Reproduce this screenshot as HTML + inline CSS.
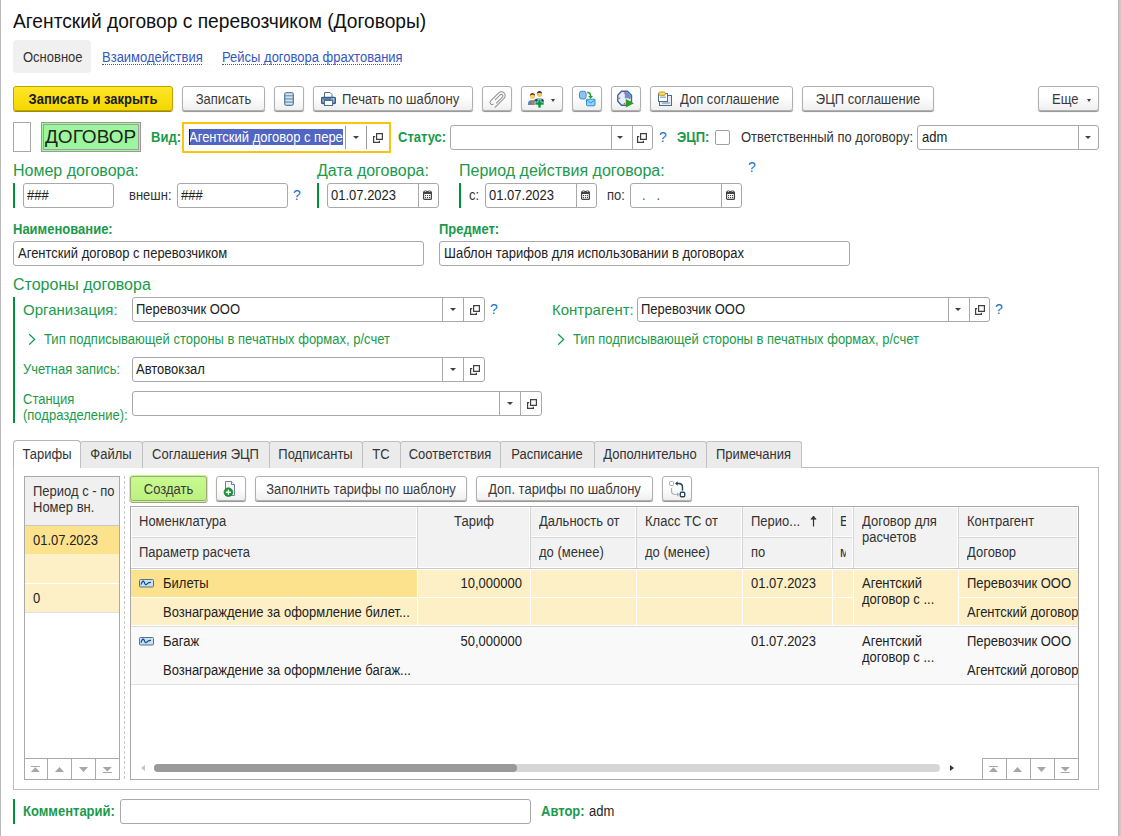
<!DOCTYPE html>
<html><head><meta charset="utf-8">
<style>
*{box-sizing:border-box;margin:0;padding:0}
html,body{width:1121px;height:836px;overflow:hidden;background:#fff}
body{position:relative;font-family:"Liberation Sans",sans-serif;font-size:13px;color:#333}
.a{position:absolute;white-space:nowrap}
.t{position:absolute;white-space:nowrap;line-height:15px;transform:scaleY(1.08);transform-origin:0 12px}
.bt{display:inline-block;transform:scaleY(1.08);transform-origin:0 15.5px}
.g{color:#1b9a4b}
.gb{color:#1b9a4b;font-weight:bold}
.btn{position:absolute;height:25px;border:1px solid #b0b0b0;border-radius:3px;background:linear-gradient(#fff 0%,#fff 45%,#efefef 100%);box-shadow:0 1px 0 #9a9a9a,0 1px 1px #b8b8b8;color:#3a3a3a;text-align:center;line-height:22px;padding-top:2px;white-space:nowrap}
.fld{position:absolute;border:1px solid #a9a9a9;border-radius:3px;background:#fff}
.sep{position:absolute;top:0;bottom:0;width:1px;background:#a9a9a9}
.gbar{position:absolute;width:2px;background:#00903c}
.q{position:absolute;color:#1a73c6;font-size:14px;font-weight:normal}
.dd{position:absolute;width:0;height:0;border-left:3px solid transparent;border-right:3px solid transparent;border-top:3px solid #404040}
.cal,.opn{position:absolute}
svg{display:block}
.ico{position:absolute;width:14px;height:7px;border:1px solid #5a7ea8;border-radius:1px;background:#cfe0f2}
.tab{position:absolute;top:440px;height:28px;border:1px solid #c4c4c4;border-bottom:none;border-radius:3px 3px 0 0;background:#ececec;text-align:center;line-height:25px;color:#333}
</style></head><body>
<!-- window edges -->
<div class="a" style="left:0;top:0;width:1px;height:836px;background:#b9b9b9"></div>
<div class="a" style="left:1118px;top:0;width:3px;height:836px;background:linear-gradient(90deg,#b0b0b0,#c6c6c6,#cccccc)"></div>

<!-- title -->
<div class="t" style="left:13px;top:11px;font-size:19.2px;line-height:22px;color:#111;transform-origin:0 17.65px">Агентский договор с перевозчиком (Договоры)</div>

<!-- nav -->
<div class="a" style="left:13px;top:40px;width:78px;height:33px;background:#f0f0f0;border-radius:4px"></div>
<div class="t" style="left:23px;top:50px;color:#333">Основное</div>
<div class="t" style="left:102px;top:50px;color:#3358c0">Взаимодействия</div>
<div class="a" style="left:102px;top:64px;width:100px;height:1px;border-bottom:1px dotted #3358c0"></div>
<div class="t" style="left:222px;top:50px;color:#3358c0">Рейсы договора фрахтования</div>
<div class="a" style="left:222px;top:64px;width:178px;height:1px;border-bottom:1px dotted #3358c0"></div>

<!-- toolbar -->
<div class="btn" style="left:13px;top:86px;width:160px;background:linear-gradient(#ffe628,#f4d700);border-color:#c2a300;box-shadow:0 1px 0 #a08a00;font-weight:bold;color:#1a1a1a"><span class="bt">Записать и закрыть</span></div>
<div class="btn" style="left:182px;top:86px;width:83px"><span class="bt">Записать</span></div>
<div class="btn" style="left:274px;top:86px;width:30px"></div>
<div class="btn" style="left:313px;top:86px;width:160px;text-align:left;padding-left:28px"><span class="bt">Печать по шаблону</span></div>
<div class="btn" style="left:482px;top:86px;width:30px"></div>
<div class="btn" style="left:521px;top:86px;width:42px"></div>
<div class="btn" style="left:572px;top:86px;width:30px"></div>
<div class="btn" style="left:611px;top:86px;width:30px"></div>
<div class="btn" style="left:650px;top:86px;width:143px;text-align:left;padding-left:29px"><span class="bt">Доп соглашение</span></div>
<div class="btn" style="left:802px;top:86px;width:132px"><span class="bt">ЭЦП соглашение</span></div>
<div class="btn" style="left:1038px;top:86px;width:61px;text-align:left;padding-left:13px"><span class="bt">Еще</span></div>
<div class="dd" style="left:1087px;top:99px;border-left-width:2.5px;border-right-width:2.5px"></div>


<!-- toolbar icons -->
<svg class="a" style="left:284px;top:92px" width="10" height="14" viewBox="0 0 10 14">
 <rect x="0.5" y="0.5" width="9" height="13" rx="2" fill="#7896b2" stroke="#5e7f9e"/>
 <rect x="1.5" y="1.3" width="7" height="1.8" fill="#d4e6f4"/>
 <rect x="1.5" y="4.4" width="7" height="1.8" fill="#d4e6f4"/>
 <rect x="1.5" y="7.6" width="7" height="1.8" fill="#d4e6f4"/>
 <rect x="1.5" y="10.8" width="7" height="1.8" fill="#d4e6f4"/>
</svg>
<svg class="a" style="left:321px;top:92px" width="15" height="14" viewBox="0 0 15 14">
 <path d="M3.5 0.5H9L11 2.5V6H3.5Z" fill="#fff" stroke="#4f6f8f"/>
 <rect x="0.5" y="5.5" width="14" height="6" rx="1.5" fill="#8eaed0" stroke="#325d88" stroke-width="1.6"/>
 <rect x="2.5" y="6.6" width="10" height="1" fill="#2f557d"/>
 <rect x="10.3" y="6.4" width="1.2" height="1" fill="#fff"/><rect x="12" y="6.4" width="1.2" height="1" fill="#fff"/>
 <rect x="3.5" y="8.5" width="8" height="5" fill="#fff" stroke="#4f6f8f"/>
</svg>
<svg class="a" style="left:487px;top:90px" width="20" height="20" viewBox="0 0 20 20">
 <g transform="rotate(45 10 10)" fill="none" stroke="#929292" stroke-width="1.05">
  <path d="M13.8 17 V3.8 A3.8 3.8 0 0 0 6.2 3.8 V15.2 A2 2 0 0 0 10.2 15.2"/>
  <path d="M8.6 11.5 V4.2 A1.6 1.6 0 0 1 11.8 4.2 V13"/>
 </g>
</svg>
<svg class="a" style="left:527px;top:90px" width="18" height="18" viewBox="0 0 18 18">
 <path d="M7 10.5 Q8 8.5 11 8.5 L14 8.5 Q16.8 8.7 17 11 L17 13 L7 13Z" fill="#2b3470"/>
 <circle cx="12.5" cy="4.3" r="2.6" fill="#f3c463"/>
 <path d="M9.8 4 Q10 1 12.5 1 Q15 1 15.2 4 Q14 2.6 12.5 2.7 Q11 2.6 9.8 4Z" fill="#2d2f5e"/>
 <path d="M1 15 L1 13.2 Q1.3 10.4 4 10.3 L7 10.3 Q9.5 10.5 9.8 13.2 L9.8 15Z" fill="#5d88ad"/>
 <path d="M5.1 10.4 L5.9 10.4 L6.2 15 L4.8 15Z" fill="#e2735a"/>
 <circle cx="5.5" cy="6.3" r="2.6" fill="#f5cf6a"/>
 <path d="M2.8 6 Q3 3.1 5.5 3.1 Q8 3.1 8.2 6 Q7 4.6 5.5 4.7 Q4 4.6 2.8 6Z" fill="#6b3a10"/>
 <path d="M11 9H14V12H17V15H14V18H11V15H8V12H11Z" fill="#05983e" stroke="#fff" stroke-width="0.6"/>
</svg>
<div class="dd" style="left:551px;top:99px;border-left-width:2.5px;border-right-width:2.5px;border-top-width:3px"></div>
<svg class="a" style="left:578px;top:90px" width="18" height="17" viewBox="0 0 18 17">
 <rect x="1.5" y="1.2" width="6.6" height="7.8" rx="2.2" fill="#8cc4ef" stroke="#3b8bd2" stroke-width="1"/>
 <path d="M9.3 2.6 Q12.8 2.3 12.6 6.5" fill="none" stroke="#1f9f1f" stroke-width="1.5"/>
 <path d="M10.2 6 L15 6 L12.6 8.8Z" fill="#1f9f1f"/>
 <rect x="8.5" y="9.2" width="8.5" height="6.6" rx="1" fill="#92d3f9" stroke="#2e8ad6" stroke-width="1"/>
 <path d="M8.8 10 L12.75 13 L16.7 10" fill="none" stroke="#2e8ad6" stroke-width="0.9"/>
</svg>
<svg class="a" style="left:617px;top:90px" width="18" height="18" viewBox="0 0 18 18">
 <path d="M4.5 1.2H10.5L14.5 5.2V11.2L10.5 15.2H4.5L0.8 11.2V5.2Z" fill="#e9eff9" stroke="#3c64ae" stroke-width="1.4"/>
 <path d="M7.8 2 H10.2 L13.8 5.5 V8.2 H7.8Z" fill="#6f8fd0"/>
 <g fill="#f0503c"><circle cx="7.5" cy="3" r="0.8"/><circle cx="12.5" cy="8.2" r="0.8"/><circle cx="7.5" cy="13.5" r="0.8"/><circle cx="2.5" cy="8.2" r="0.8"/></g>
 <path d="M8.8 9 L17 13.2 L8.8 17.4Z" fill="#2b9b2b"/>
</svg>
<svg class="a" style="left:657px;top:91px" width="16" height="16" viewBox="0 0 16 16">
 <rect x="2.5" y="4.5" width="12" height="10" fill="#e8eef4" stroke="#4a6f8e"/>
 <rect x="5" y="11" width="8" height="2" fill="#a9bccd"/>
 <rect x="1.5" y="2.5" width="9" height="8" fill="#fff" stroke="#4a6f8e"/>
 <rect x="3" y="5.5" width="6" height="1.5" fill="#9fb4c8"/>
 <rect x="1.8" y="1" width="6.6" height="3.4" rx="1.4" fill="#f7de70" stroke="#c99b1b" stroke-width="1"/>
</svg>
<!-- row 2 -->
<div class="a" style="left:13px;top:122px;width:18px;height:30px;border:1px solid #a9a9a9"></div>
<div class="a" style="left:41px;top:122px;width:100px;height:30px;border:1px solid #9a9a9a;background:#9cf79c;padding:1px">
  <div style="width:100%;height:100%;border:1px solid #a49ca4"></div>
</div>
<div class="t" style="left:45px;top:126px;font-size:19px;line-height:22px;color:#222;transform:none">ДОГОВОР</div>
<div class="t gb" style="left:151px;top:130px">Вид:</div>
<div class="a" style="left:182px;top:122px;width:209px;height:31px;border:2px solid #f9c40e;background:#fff"></div>
<div class="a" style="left:189px;top:129px;width:154px;height:16px;background:#5165c2"></div>
<div class="t" style="left:189px;top:130px;color:#fff">Агентский договор с пере</div>
<div class="a" style="left:189px;top:129px;width:1px;height:16px;background:#1a1a1a"></div>
<div class="a" style="left:345px;top:126px;width:1px;height:23px;background:#999"></div>
<div class="a" style="left:366px;top:126px;width:1px;height:23px;background:#999"></div>
<div class="dd" style="left:353px;top:136px"></div>
<div class="opn" style="left:373px;top:133px"><svg width="10" height="10" viewBox="0 0 10 10"><path d="M3.6 0.6H9.4V6.4H3.6Z M2.2 3.6H0.6V9.4H6.4V7.8" fill="none" stroke="#404040" stroke-width="1.2"/></svg></div>

<div class="t gb" style="left:398px;top:130px">Статус:</div>
<div class="fld" style="left:450px;top:125px;width:203px;height:25px"><div class="sep" style="left:160px"></div><div class="sep" style="left:181px"></div></div>
<div class="dd" style="left:617px;top:136px"></div>
<div class="opn" style="left:637px;top:133px"><svg width="10" height="10" viewBox="0 0 10 10"><path d="M3.6 0.6H9.4V6.4H3.6Z M2.2 3.6H0.6V9.4H6.4V7.8" fill="none" stroke="#404040" stroke-width="1.2"/></svg></div>
<div class="q" style="left:659px;top:129px">?</div>
<div class="t gb" style="left:677px;top:130px">ЭЦП:</div>
<div class="a" style="left:715px;top:130px;width:15px;height:15px;border:1px solid #a0a0a0;border-radius:2px"></div>
<div class="t" style="left:741px;top:130px">Ответственный по договору:</div>
<div class="fld" style="left:917px;top:125px;width:182px;height:25px"><div class="sep" style="left:160px"></div></div>
<div class="t" style="left:922px;top:130px;color:#222">adm</div>
<div class="dd" style="left:1085px;top:136px"></div>


<!-- row 3: numbers/dates -->
<div class="t g" style="left:13px;top:162px;font-size:16px;line-height:18px;transform:none">Номер договора:</div>
<div class="gbar" style="left:13px;top:183px;height:25px"></div>
<div class="fld" style="left:23px;top:183px;width:91px;height:25px"></div>
<div class="t" style="left:27px;top:188px;color:#222">###</div>
<div class="t" style="left:129px;top:188px">внешн:</div>
<div class="fld" style="left:177px;top:183px;width:111px;height:25px"></div>
<div class="t" style="left:181px;top:188px;color:#222">###</div>
<div class="q" style="left:293px;top:187px">?</div>

<div class="t g" style="left:317px;top:162px;font-size:16px;line-height:18px;transform:none">Дата договора:</div>
<div class="gbar" style="left:317px;top:183px;height:25px"></div>
<div class="fld" style="left:327px;top:183px;width:112px;height:25px"><div class="sep" style="left:90px"></div></div>
<div class="t" style="left:331px;top:188px;color:#222">01.07.2023</div>
<div class="cal" style="left:423px;top:190px"><svg width="9" height="10" viewBox="0 0 9 10"><rect x="0.6" y="1.6" width="7.8" height="7.8" rx="1" fill="#fff" stroke="#444" stroke-width="1.2"/><rect x="0.6" y="1.6" width="7.8" height="2.4" fill="#444"/><circle cx="2.5" cy="1.2" r="0.9" fill="#fff" stroke="#444" stroke-width="0.6"/><circle cx="6.5" cy="1.2" r="0.9" fill="#fff" stroke="#444" stroke-width="0.6"/><g fill="#444"><rect x="2" y="5" width="1.1" height="1.1"/><rect x="4" y="5" width="1.1" height="1.1"/><rect x="6" y="5" width="1.1" height="1.1"/><rect x="2" y="7" width="1.1" height="1.1"/><rect x="4" y="7" width="1.1" height="1.1"/><rect x="6" y="7" width="1.1" height="1.1"/></g></svg></div>

<div class="t g" style="left:459px;top:162px;font-size:16px;line-height:18px;transform:none">Период действия договора:</div>
<div class="gbar" style="left:459px;top:183px;height:25px"></div>
<div class="t" style="left:469px;top:188px">с:</div>
<div class="fld" style="left:485px;top:183px;width:112px;height:25px"><div class="sep" style="left:90px"></div></div>
<div class="t" style="left:489px;top:188px;color:#222">01.07.2023</div>
<div class="cal" style="left:581px;top:190px"><svg width="9" height="10" viewBox="0 0 9 10"><rect x="0.6" y="1.6" width="7.8" height="7.8" rx="1" fill="#fff" stroke="#444" stroke-width="1.2"/><rect x="0.6" y="1.6" width="7.8" height="2.4" fill="#444"/><circle cx="2.5" cy="1.2" r="0.9" fill="#fff" stroke="#444" stroke-width="0.6"/><circle cx="6.5" cy="1.2" r="0.9" fill="#fff" stroke="#444" stroke-width="0.6"/><g fill="#444"><rect x="2" y="5" width="1.1" height="1.1"/><rect x="4" y="5" width="1.1" height="1.1"/><rect x="6" y="5" width="1.1" height="1.1"/><rect x="2" y="7" width="1.1" height="1.1"/><rect x="4" y="7" width="1.1" height="1.1"/><rect x="6" y="7" width="1.1" height="1.1"/></g></svg></div>
<div class="t" style="left:607px;top:188px">по:</div>
<div class="fld" style="left:630px;top:183px;width:112px;height:25px"><div class="sep" style="left:90px"></div></div>
<div class="t" style="left:642px;top:188px;color:#555">.&nbsp;&nbsp;&nbsp;.</div>
<div class="cal" style="left:726px;top:190px"><svg width="9" height="10" viewBox="0 0 9 10"><rect x="0.6" y="1.6" width="7.8" height="7.8" rx="1" fill="#fff" stroke="#444" stroke-width="1.2"/><rect x="0.6" y="1.6" width="7.8" height="2.4" fill="#444"/><circle cx="2.5" cy="1.2" r="0.9" fill="#fff" stroke="#444" stroke-width="0.6"/><circle cx="6.5" cy="1.2" r="0.9" fill="#fff" stroke="#444" stroke-width="0.6"/><g fill="#444"><rect x="2" y="5" width="1.1" height="1.1"/><rect x="4" y="5" width="1.1" height="1.1"/><rect x="6" y="5" width="1.1" height="1.1"/><rect x="2" y="7" width="1.1" height="1.1"/><rect x="4" y="7" width="1.1" height="1.1"/><rect x="6" y="7" width="1.1" height="1.1"/></g></svg></div>
<div class="q" style="left:748px;top:159px">?</div>

<!-- name / subject -->
<div class="t gb" style="left:13px;top:222px">Наименование:</div>
<div class="fld" style="left:13px;top:241px;width:411px;height:25px"></div>
<div class="t" style="left:18px;top:246px;color:#222">Агентский договор с перевозчиком</div>
<div class="t gb" style="left:439px;top:222px">Предмет:</div>
<div class="fld" style="left:439px;top:241px;width:411px;height:25px"></div>
<div class="t" style="left:444px;top:246px;color:#222">Шаблон тарифов для использовании в договорах</div>

<!-- parties -->
<div class="t g" style="left:13px;top:276px;font-size:16px;line-height:18px;transform:none">Стороны договора</div>
<div class="gbar" style="left:13px;top:297px;height:126px"></div>
<div class="t g" style="left:23px;top:301px;font-size:15px;line-height:17px;transform:none">Организация:</div>
<div class="fld" style="left:132px;top:297px;width:353px;height:25px"><div class="sep" style="left:309px"></div><div class="sep" style="left:330px"></div></div>
<div class="t" style="left:136px;top:302px;color:#222">Перевозчик ООО</div>
<div class="dd" style="left:450px;top:308px"></div>
<div class="opn" style="left:470px;top:305px"><svg width="10" height="10" viewBox="0 0 10 10"><path d="M3.6 0.6H9.4V6.4H3.6Z M2.2 3.6H0.6V9.4H6.4V7.8" fill="none" stroke="#404040" stroke-width="1.2"/></svg></div>
<div class="q" style="left:490px;top:301px">?</div>
<svg class="a" style="left:28px;top:333px" width="10" height="13" viewBox="0 0 10 13"><path d="M1.2 1.2L6.6 6.4L1.2 11.6" fill="none" stroke="#05994a" stroke-width="1.3"/></svg>
<div class="t g" style="left:44px;top:332px">Тип подписывающей стороны в печатных формах, р/счет</div>
<div class="t g" style="left:23px;top:362px">Учетная запись:</div>
<div class="fld" style="left:132px;top:357px;width:353px;height:25px"><div class="sep" style="left:309px"></div><div class="sep" style="left:330px"></div></div>
<div class="t" style="left:136px;top:362px;color:#222">Автовокзал</div>
<div class="dd" style="left:450px;top:368px"></div>
<div class="opn" style="left:470px;top:365px"><svg width="10" height="10" viewBox="0 0 10 10"><path d="M3.6 0.6H9.4V6.4H3.6Z M2.2 3.6H0.6V9.4H6.4V7.8" fill="none" stroke="#404040" stroke-width="1.2"/></svg></div>
<div class="t g" style="left:23px;top:392px;">Станция</div>
<div class="t g" style="left:23px;top:408px;">(подразделение):</div>
<div class="fld" style="left:132px;top:391px;width:410px;height:25px"><div class="sep" style="left:366px"></div><div class="sep" style="left:387px"></div></div>
<div class="dd" style="left:507px;top:402px"></div>
<div class="opn" style="left:527px;top:399px"><svg width="10" height="10" viewBox="0 0 10 10"><path d="M3.6 0.6H9.4V6.4H3.6Z M2.2 3.6H0.6V9.4H6.4V7.8" fill="none" stroke="#404040" stroke-width="1.2"/></svg></div>

<div class="t g" style="left:552px;top:301px;font-size:15px;line-height:17px;transform:none">Контрагент:</div>
<div class="fld" style="left:637px;top:297px;width:353px;height:25px"><div class="sep" style="left:310px"></div><div class="sep" style="left:331px"></div></div>
<div class="t" style="left:641px;top:302px;color:#222">Перевозчик ООО</div>
<div class="dd" style="left:955px;top:308px"></div>
<div class="opn" style="left:975px;top:305px"><svg width="10" height="10" viewBox="0 0 10 10"><path d="M3.6 0.6H9.4V6.4H3.6Z M2.2 3.6H0.6V9.4H6.4V7.8" fill="none" stroke="#404040" stroke-width="1.2"/></svg></div>
<div class="q" style="left:995px;top:301px">?</div>
<svg class="a" style="left:557px;top:333px" width="10" height="13" viewBox="0 0 10 13"><path d="M1.2 1.2L6.6 6.4L1.2 11.6" fill="none" stroke="#05994a" stroke-width="1.3"/></svg>
<div class="t g" style="left:573px;top:332px">Тип подписывающей стороны в печатных формах, р/счет</div>

<!-- tab panel -->
<div class="a" style="left:13px;top:467px;width:1086px;height:323px;border:1px solid #bcbcbc"></div>
<div class="a" style="left:13px;top:440px;width:68px;height:28px;border:1px solid #b4b4b4;border-bottom:none;border-radius:4px 4px 0 0;background:#fff"></div>
<div class="t" style="left:14px;top:447px;width:66px;text-align:center;color:#333">Тарифы</div>
<div class="a" style="left:80px;top:441px;width:63px;height:27px;border:1px solid #c0c0c0;border-bottom:none;border-radius:3px 3px 0 0;background:#ebebeb"></div>
<div class="t" style="left:80px;top:447px;width:62px;text-align:center;color:#333">Файлы</div>
<div class="a" style="left:142px;top:441px;width:128px;height:27px;border:1px solid #c0c0c0;border-bottom:none;border-radius:3px 3px 0 0;background:#ebebeb"></div>
<div class="t" style="left:142px;top:447px;width:127px;text-align:center;color:#333">Соглашения ЭЦП</div>
<div class="a" style="left:269px;top:441px;width:94px;height:27px;border:1px solid #c0c0c0;border-bottom:none;border-radius:3px 3px 0 0;background:#ebebeb"></div>
<div class="t" style="left:269px;top:447px;width:93px;text-align:center;color:#333">Подписанты</div>
<div class="a" style="left:362px;top:441px;width:39px;height:27px;border:1px solid #c0c0c0;border-bottom:none;border-radius:3px 3px 0 0;background:#ebebeb"></div>
<div class="t" style="left:362px;top:447px;width:38px;text-align:center;color:#333">ТС</div>
<div class="a" style="left:400px;top:441px;width:101px;height:27px;border:1px solid #c0c0c0;border-bottom:none;border-radius:3px 3px 0 0;background:#ebebeb"></div>
<div class="t" style="left:400px;top:447px;width:100px;text-align:center;color:#333">Соответствия</div>
<div class="a" style="left:500px;top:441px;width:95px;height:27px;border:1px solid #c0c0c0;border-bottom:none;border-radius:3px 3px 0 0;background:#ebebeb"></div>
<div class="t" style="left:500px;top:447px;width:94px;text-align:center;color:#333">Расписание</div>
<div class="a" style="left:594px;top:441px;width:113px;height:27px;border:1px solid #c0c0c0;border-bottom:none;border-radius:3px 3px 0 0;background:#ebebeb"></div>
<div class="t" style="left:594px;top:447px;width:112px;text-align:center;color:#333">Дополнительно</div>
<div class="a" style="left:706px;top:441px;width:96px;height:27px;border:1px solid #c0c0c0;border-bottom:none;border-radius:3px 3px 0 0;background:#ebebeb"></div>
<div class="t" style="left:706px;top:447px;width:95px;text-align:center;color:#333">Примечания</div>

<!-- left list -->
<div class="a" style="left:24px;top:476px;width:96px;height:304px;border:1px solid #a9a9a9;background:#fff"></div>
<div class="a" style="left:25px;top:477px;width:94px;height:48px;background:#f0f0f0"></div>
<div class="a" style="left:25px;top:525px;width:94px;height:1px;background:#c8c8c8"></div>
<div class="a" style="left:25px;top:526px;width:94px;height:28px;background:#fde28e"></div>
<div class="a" style="left:25px;top:554px;width:94px;height:29px;background:#fdf0c6"></div>
<div class="a" style="left:25px;top:584px;width:94px;height:28px;background:#fdf0c6"></div>
<div class="a" style="left:25px;top:612px;width:94px;height:1px;background:#e2e2e2"></div>
<div class="t" style="left:33px;top:484px;color:#333">Период с - по</div>
<div class="t" style="left:33px;top:500px;color:#333">Номер вн.</div>
<div class="t" style="left:33px;top:533px;color:#222">01.07.2023</div>
<div class="t" style="left:33px;top:591px;color:#222">0</div>
<div class="a" style="left:24px;top:758px;width:96px;height:22px;border:1px solid #a9a9a9;border-top:1px solid #a9a9a9"></div>
<div class="a" style="left:47px;top:759px;width:1px;height:20px;background:#a9a9a9"></div>
<div class="a" style="left:71px;top:759px;width:1px;height:20px;background:#a9a9a9"></div>
<div class="a" style="left:95px;top:759px;width:1px;height:20px;background:#a9a9a9"></div>
<div class="a" style="left:124px;top:476px;width:1px;height:304px;background:repeating-linear-gradient(#c8c8c8 0 3px,transparent 3px 5px)"></div>

<!-- table toolbar -->
<div class="btn" style="left:130px;top:476px;width:77px;background:linear-gradient(#c8fb8e,#bcf182);border-color:#a2a47a;box-shadow:0 0 0 1px #c4f98c,0 1px 0 1px #9aa878"><span class="bt">Создать</span></div>
<div class="btn" style="left:216px;top:476px;width:30px"></div>
<div class="btn" style="left:255px;top:476px;width:212px"><span class="bt">Заполнить тарифы по шаблону</span></div>
<div class="btn" style="left:476px;top:476px;width:177px"><span class="bt">Доп. тарифы по шаблону</span></div>
<div class="btn" style="left:662px;top:476px;width:30px"></div>

<!-- table -->
<div class="a" style="left:130px;top:506px;width:949px;height:274px;border:1px solid #a9a9a9;background:#fff;overflow:hidden">
  <div class="a" style="left:0;top:0;width:947px;height:62px;background:#fff"></div>
  <div class="a" style="left:0;top:61px;width:947px;height:1px;background:#c8c8c8"></div>
<div class="a" style="left:286px;top:0;width:1px;height:61px;background:#d6d6d6"></div>
<div class="a" style="left:399px;top:0;width:1px;height:61px;background:#d6d6d6"></div>
<div class="a" style="left:505px;top:0;width:1px;height:61px;background:#d6d6d6"></div>
<div class="a" style="left:611px;top:0;width:1px;height:61px;background:#d6d6d6"></div>
<div class="a" style="left:701px;top:0;width:1px;height:61px;background:#d6d6d6"></div>
<div class="a" style="left:722px;top:0;width:1px;height:61px;background:#d6d6d6"></div>
<div class="a" style="left:827px;top:0;width:1px;height:61px;background:#d6d6d6"></div>
<div class="a" style="left:1px;top:1px;width:284px;height:28px;background:#f2f2f2"></div>
<div class="a" style="left:1px;top:31px;width:284px;height:29px;background:#f2f2f2"></div>
<div class="a" style="left:1px;top:30px;width:284px;height:1px;background:#d6d6d6"></div>
<div class="a" style="left:287px;top:1px;width:111px;height:59px;background:#f2f2f2"></div>
<div class="a" style="left:400px;top:1px;width:104px;height:28px;background:#f2f2f2"></div>
<div class="a" style="left:400px;top:31px;width:104px;height:29px;background:#f2f2f2"></div>
<div class="a" style="left:400px;top:30px;width:104px;height:1px;background:#d6d6d6"></div>
<div class="a" style="left:506px;top:1px;width:104px;height:28px;background:#f2f2f2"></div>
<div class="a" style="left:506px;top:31px;width:104px;height:29px;background:#f2f2f2"></div>
<div class="a" style="left:506px;top:30px;width:104px;height:1px;background:#d6d6d6"></div>
<div class="a" style="left:612px;top:1px;width:88px;height:28px;background:#f2f2f2"></div>
<div class="a" style="left:612px;top:31px;width:88px;height:29px;background:#f2f2f2"></div>
<div class="a" style="left:612px;top:30px;width:88px;height:1px;background:#d6d6d6"></div>
<div class="a" style="left:702px;top:1px;width:19px;height:28px;background:#f2f2f2"></div>
<div class="a" style="left:702px;top:31px;width:19px;height:29px;background:#f2f2f2"></div>
<div class="a" style="left:702px;top:30px;width:19px;height:1px;background:#d6d6d6"></div>
<div class="a" style="left:723px;top:1px;width:103px;height:59px;background:#f2f2f2"></div>
<div class="a" style="left:828px;top:1px;width:118px;height:28px;background:#f2f2f2"></div>
<div class="a" style="left:828px;top:31px;width:118px;height:29px;background:#f2f2f2"></div>
<div class="a" style="left:828px;top:30px;width:118px;height:1px;background:#d6d6d6"></div>
</div>

<!-- table header texts -->
<div class="t" style="left:139px;top:514px">Номенклатура</div>
<div class="t" style="left:139px;top:545px">Параметр расчета</div>
<div class="t" style="left:418px;top:514px;width:112px;text-align:center">Тариф</div>
<div class="t" style="left:539px;top:514px">Дальность от</div>
<div class="t" style="left:539px;top:545px">до (менее)</div>
<div class="t" style="left:645px;top:514px">Класс ТС от</div>
<div class="t" style="left:645px;top:545px">до (менее)</div>
<div class="t" style="left:751px;top:514px">Перио...</div>
<svg class="a" style="left:810px;top:515px" width="7" height="12" viewBox="0 0 7 12"><path d="M3.5 1.2V11.5" stroke="#333" stroke-width="1.2"/><path d="M0.8 4.2L3.5 1L6.2 4.2Z" fill="#333" stroke="#333" stroke-width="0.6"/></svg>
<div class="t" style="left:751px;top:545px">по</div>
<div class="a" style="left:833px;top:507px;width:13px;height:60px;overflow:hidden"><div class="t" style="left:7px;top:7px">Е</div><div class="t" style="left:7px;top:38px">м</div></div>
<div class="t" style="left:862px;top:514px;">Договор для</div>
<div class="t" style="left:862px;top:530px;">расчетов</div>
<div class="a" style="left:959px;top:507px;width:119px;height:170px;overflow:hidden">
<div class="t" style="left:8px;top:7px">Контрагент</div>
<div class="t" style="left:8px;top:38px">Договор</div>
</div>
<div class="a" style="left:131px;top:568px;width:947px;height:1px;background:#c8c8c8"></div>
<div class="a" style="left:131px;top:569px;width:947px;height:57px;background:#fff"></div>
<div class="a" style="left:131px;top:570px;width:286px;height:27px;background:#fde28e"></div>
<div class="a" style="left:131px;top:598px;width:286px;height:27px;background:#fdf0c6"></div>
<div class="a" style="left:418px;top:570px;width:112px;height:27px;background:#fdf0c6"></div>
<div class="a" style="left:418px;top:598px;width:112px;height:27px;background:#fdf0c6"></div>
<div class="a" style="left:531px;top:570px;width:105px;height:27px;background:#fdf0c6"></div>
<div class="a" style="left:531px;top:598px;width:105px;height:27px;background:#fdf0c6"></div>
<div class="a" style="left:637px;top:570px;width:105px;height:27px;background:#fdf0c6"></div>
<div class="a" style="left:637px;top:598px;width:105px;height:27px;background:#fdf0c6"></div>
<div class="a" style="left:743px;top:570px;width:89px;height:27px;background:#fdf0c6"></div>
<div class="a" style="left:743px;top:598px;width:89px;height:27px;background:#fdf0c6"></div>
<div class="a" style="left:833px;top:570px;width:20px;height:27px;background:#fdf0c6"></div>
<div class="a" style="left:833px;top:598px;width:20px;height:27px;background:#fdf0c6"></div>
<div class="a" style="left:854px;top:570px;width:104px;height:55px;background:#fdf0c6"></div>
<div class="a" style="left:959px;top:570px;width:119px;height:27px;background:#fdf0c6"></div>
<div class="a" style="left:959px;top:598px;width:119px;height:27px;background:#fdf0c6"></div>
<div class="a" style="left:131px;top:626px;width:947px;height:1px;background:#dcdcdc"></div>
<div class="a" style="left:131px;top:627px;width:947px;height:57px;background:#f9f9f9"></div>
<div class="a" style="left:131px;top:684px;width:947px;height:1px;background:#e0e0e0"></div>

<div class="a" style="left:139px;top:579px"><svg width="16" height="9" viewBox="0 0 16 9"><rect x="0.5" y="0.5" width="14" height="7.5" rx="1" fill="#c8e0f4" stroke="#56718e"/><path d="M2 5.6 Q3.5 1.4 4.5 2.2 Q5.4 3 6 5 Q6.8 6.4 8.6 4.4 Q9.6 3.4 12 3.4" fill="none" stroke="#134d8a" stroke-width="1.2"/></svg></div>
<div class="t" style="left:163px;top:576px;color:#222">Билеты</div>
<div class="t" style="left:163px;top:605px;color:#222">Вознаграждение за оформление билет...</div>
<div class="t" style="left:418px;top:576px;width:104px;text-align:right;color:#222">10,000000</div>
<div class="t" style="left:751px;top:576px;color:#222">01.07.2023</div>
<div class="t" style="left:862px;top:576px;color:#222">Агентский</div>
<div class="t" style="left:862px;top:592px;color:#222">договор с ...</div>
<div class="a" style="left:139px;top:637px"><svg width="16" height="9" viewBox="0 0 16 9"><rect x="0.5" y="0.5" width="14" height="7.5" rx="1" fill="#c8e0f4" stroke="#56718e"/><path d="M2 5.6 Q3.5 1.4 4.5 2.2 Q5.4 3 6 5 Q6.8 6.4 8.6 4.4 Q9.6 3.4 12 3.4" fill="none" stroke="#134d8a" stroke-width="1.2"/></svg></div>
<div class="t" style="left:163px;top:634px;color:#222">Багаж</div>
<div class="t" style="left:163px;top:663px;color:#222">Вознаграждение за оформление багаж...</div>
<div class="t" style="left:418px;top:634px;width:104px;text-align:right;color:#222">50,000000</div>
<div class="t" style="left:751px;top:634px;color:#222">01.07.2023</div>
<div class="t" style="left:862px;top:634px;color:#222">Агентский</div>
<div class="t" style="left:862px;top:650px;color:#222">договор с ...</div>
<div class="a" style="left:959px;top:570px;width:119px;height:120px;overflow:hidden">
<div class="t" style="left:8px;top:6px;color:#222">Перевозчик ООО</div>
<div class="t" style="left:8px;top:35px;color:#222">Агентский договор</div>
<div class="t" style="left:8px;top:64px;color:#222">Перевозчик ООО</div>
<div class="t" style="left:8px;top:93px;color:#222">Агентский договор</div>
</div>

<!-- h scrollbar -->
<div class="a" style="left:141px;top:765px;width:0;height:0;border-top:3px solid transparent;border-bottom:3px solid transparent;border-right:4px solid #c4c4c4"></div>
<div class="a" style="left:154px;top:764px;width:786px;height:8px;border-radius:4px;background:#d6d6d6"></div>
<div class="a" style="left:154px;top:764px;width:363px;height:8px;border-radius:4px;background:#999"></div>
<div class="a" style="left:950px;top:765px;width:0;height:0;border-top:3px solid transparent;border-bottom:3px solid transparent;border-left:4px solid #333"></div>
<!-- table nav -->
<div class="a" style="left:982px;top:758px;width:97px;height:22px;border:1px solid #a9a9a9;background:#fff"></div>
<div class="a" style="left:1006px;top:759px;width:1px;height:20px;background:#a9a9a9"></div>
<div class="a" style="left:1030px;top:759px;width:1px;height:20px;background:#a9a9a9"></div>
<div class="a" style="left:1054px;top:759px;width:1px;height:20px;background:#a9a9a9"></div>

<!-- comment -->
<div class="gbar" style="left:13px;top:799px;height:25px"></div>
<div class="t gb" style="left:23px;top:804px">Комментарий:</div>
<div class="fld" style="left:120px;top:799px;width:411px;height:25px"></div>
<div class="t gb" style="left:541px;top:804px">Автор:</div>
<div class="t" style="left:589px;top:804px;color:#222">adm</div>
<!-- table toolbar icons -->
<svg class="a" style="left:223px;top:481px" width="16" height="16" viewBox="0 0 16 16">
 <path d="M2.5 0.5H8.5L11.5 3.5V14.5H2.5Z" fill="#f5f5f5" stroke="#6d829a"/>
 <path d="M8.5 0.5V3.5H11.5" fill="#fff" stroke="#6d829a"/>
 <circle cx="5.4" cy="11.2" r="4.4" fill="#109a30" stroke="#0b7a22" stroke-width="0.6"/>
 <path d="M5.4 8.6V13.8M2.8 11.2H8" stroke="#fff" stroke-width="1.4"/>
</svg>
<svg class="a" style="left:668px;top:480px" width="18" height="18" viewBox="0 0 18 18">
 <rect x="1.5" y="1.5" width="4" height="4" rx="1" fill="#fff" stroke="#9aaab8" stroke-width="1"/>
 <rect x="12.3" y="12.3" width="4.4" height="4.4" rx="1" fill="#fff" stroke="#284860" stroke-width="1.4"/>
 <path d="M14.5 10.5V7.2Q14.5 3.5 10.5 3.5H9" fill="none" stroke="#253f55" stroke-width="1.4"/>
 <path d="M7 3.5L9.6 1.2V5.8Z" fill="#253f55"/>
 <path d="M3.5 8V11Q3.5 14.5 7.5 14.5H9.5" fill="none" stroke="#a6b2bc" stroke-width="1.2"/>
 <path d="M11.5 14.5L9 12.2V16.8Z" fill="#a6b2bc"/>
</svg>

<!-- nav icons -->
<svg class="a" style="left:24px;top:758px" width="96" height="22" viewBox="0 0 96 22">
 <g fill="#a6a6a6">
  <rect x="6.899999999999999" y="8" width="9" height="1"/><path d="M6.899999999999999 14H15.899999999999999L11.399999999999999 9.3Z"/>
  <path d="M31 14H40L35.5 9Z"/>
  <path d="M55 9H64L59.5 14Z"/>
  <path d="M78.8 9H87.8L83.3 13.4Z"/><rect x="78.8" y="14" width="9" height="1"/>
 </g>
</svg>
<svg class="a" style="left:982px;top:758px" width="96" height="22" viewBox="0 0 96 22">
 <g fill="#a6a6a6">
  <rect x="6.899999999999999" y="8" width="9" height="1"/><path d="M6.899999999999999 14H15.899999999999999L11.399999999999999 9.3Z"/>
  <path d="M31 14H40L35.5 9Z"/>
  <path d="M55 9H64L59.5 14Z"/>
  <path d="M78.8 9H87.8L83.3 13.4Z"/><rect x="78.8" y="14" width="9" height="1"/>
 </g>
</svg>
</body></html>
